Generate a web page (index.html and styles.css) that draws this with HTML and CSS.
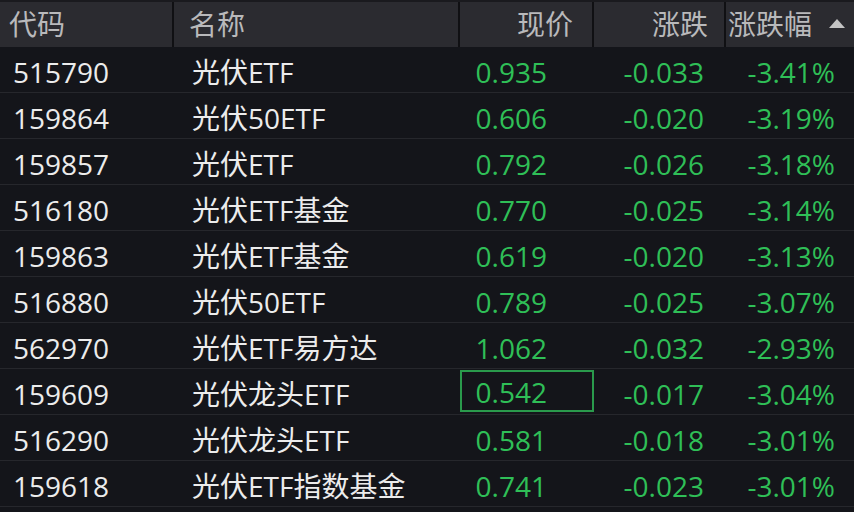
FILE: index.html
```html
<!DOCTYPE html>
<html lang="zh">
<head>
<meta charset="utf-8">
<link rel="stylesheet" href="styles.css">
</head>
<body>
<div class="table">
  <div class="head">
    <div class="h c1">代码</div>
    <div class="h c2">名称</div>
    <div class="h c3">现价</div>
    <div class="h c4">涨跌</div>
    <div class="h c5">涨跌幅<svg class="tri" width="16" height="9" viewBox="0 0 16 9"><path d="M8 0 L16 9 L0 9 Z" fill="#c4c4c4"/></svg></div>
  </div>
  <div class="row"><div class="d c1">515790</div><div class="d c2">光伏ETF</div><div class="d c3 g">0.935</div><div class="d c4 g">-0.033</div><div class="d c5 g">-3.41%</div></div>
  <div class="row"><div class="d c1">159864</div><div class="d c2">光伏50ETF</div><div class="d c3 g">0.606</div><div class="d c4 g">-0.020</div><div class="d c5 g">-3.19%</div></div>
  <div class="row"><div class="d c1">159857</div><div class="d c2">光伏ETF</div><div class="d c3 g">0.792</div><div class="d c4 g">-0.026</div><div class="d c5 g">-3.18%</div></div>
  <div class="row"><div class="d c1">516180</div><div class="d c2">光伏ETF基金</div><div class="d c3 g">0.770</div><div class="d c4 g">-0.025</div><div class="d c5 g">-3.14%</div></div>
  <div class="row"><div class="d c1">159863</div><div class="d c2">光伏ETF基金</div><div class="d c3 g">0.619</div><div class="d c4 g">-0.020</div><div class="d c5 g">-3.13%</div></div>
  <div class="row"><div class="d c1">516880</div><div class="d c2">光伏50ETF</div><div class="d c3 g">0.789</div><div class="d c4 g">-0.025</div><div class="d c5 g">-3.07%</div></div>
  <div class="row"><div class="d c1">562970</div><div class="d c2">光伏ETF易方达</div><div class="d c3 g">1.062</div><div class="d c4 g">-0.032</div><div class="d c5 g">-2.93%</div></div>
  <div class="row"><div class="d c1">159609</div><div class="d c2">光伏龙头ETF</div><div class="d c3 g sel">0.542</div><div class="d c4 g">-0.017</div><div class="d c5 g">-3.04%</div></div>
  <div class="row"><div class="d c1">516290</div><div class="d c2">光伏龙头ETF</div><div class="d c3 g">0.581</div><div class="d c4 g">-0.018</div><div class="d c5 g">-3.01%</div></div>
  <div class="row"><div class="d c1">159618</div><div class="d c2">光伏ETF指数基金</div><div class="d c3 g">0.741</div><div class="d c4 g">-0.023</div><div class="d c5 g">-3.01%</div></div>
</div>
</body>
</html>
```

FILE: styles.css
```css
html, body {
  margin: 0;
  padding: 0;
  background: #14151a;
}
body {
  width: 854px;
  height: 512px;
  overflow: hidden;
  font-family: "Open Sans", "Noto Sans CJK SC", sans-serif;
  font-size: 28px;
}
.table {
  display: flex;
  flex-direction: column;
  border-top: 2px solid #1a1a1e;
}
.head {
  display: grid;
  grid-template-columns: 174px 286px 134px 132px 1fr;
  height: 45px;
  background: #2b2b30;
  color: #b9b9bb;
}
.h {
  display: flex;
  align-items: center;
  line-height: 1;
  border-right: 2px solid #101013;
  padding-bottom: 1px;
}
.h.c5 { border-right: none; padding-left: 2px; }
.h.c1 { padding-left: 9px; }
.h.c2 { padding-left: 15px; }
.h.c3 { justify-content: flex-end; padding-right: 19px; }
.h.c4 { justify-content: flex-end; padding-right: 16px; }
.tri { margin-left: 17px; margin-bottom: 2px; }
.row {
  display: grid;
  grid-template-columns: 174px 286px 134px 132px 1fr;
  height: 45px;
  border-bottom: 1px solid #26272c;
  color: #ececec;
}
.d {
  display: flex;
  align-items: center;
  line-height: 1;
  padding-top: 4px;
}
.d.c1 { padding-left: 13px; }
.d.c2 { padding-left: 18px; }
.d.c3 { justify-content: flex-end; padding-right: 47px; }
.d.c4 { justify-content: flex-end; padding-right: 22px; }
.d.c5 { justify-content: flex-end; padding-right: 19px; }
.g { color: #2fbf57; }
.d.sel {
  margin: 1px 0 2px 0;
  padding-top: 1px;
  box-shadow: inset 0 0 0 2px #2a9a4c;
}
```
